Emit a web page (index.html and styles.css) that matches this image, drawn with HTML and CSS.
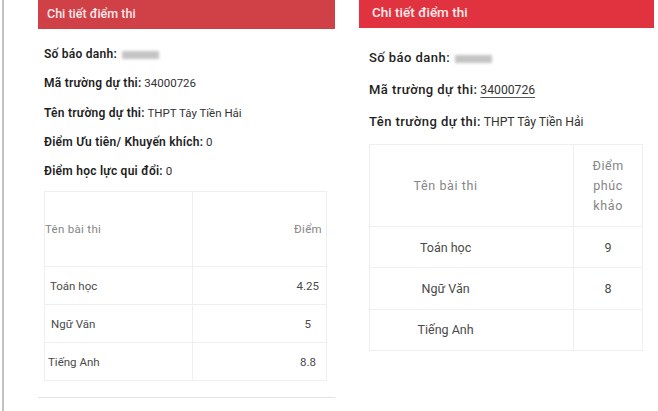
FILE: index.html
```html
<!DOCTYPE html>
<html lang="vi">
<head>
<meta charset="utf-8">
<link rel="stylesheet" href="styles.css">
</head>
<body>
<div class="page">
  <div class="left">
    <div class="edge"></div>
    <div class="card card-l">
      <div class="head head-l">Chi tiết điểm thi</div>
      <div class="body-l">
        <p class="row-l"><b>Số báo danh:</b> <span class="blur"></span></p>
        <p class="row-l"><b>Mã trường dự thi:</b> 34000726</p>
        <p class="row-l"><b>Tên trường dự thi:</b> THPT Tây Tiền Hải</p>
        <p class="row-l"><b>Điểm Ưu tiên/ Khuyến khích:</b> 0</p>
        <p class="row-l"><b>Điểm học lực qui đổi:</b> 0</p>
        <table class="tbl-l">
          <tr class="th-l"><td class="c1">Tên bài thi</td><td class="c2">Điểm</td></tr>
          <tr class="tr-l"><td class="c1 d1">Toán học</td><td class="c2 d2">4.25</td></tr>
          <tr class="tr-l"><td class="c1 d1 s1">Ngữ Văn</td><td class="c2 d2 s2">5</td></tr>
          <tr class="tr-l"><td class="c1 d1 s3">Tiếng Anh</td><td class="c2 d2 s4">8.8</td></tr>
        </table>
      </div>
    </div>
  </div>
  <div class="card card-r">
    <div class="head head-r">Chi tiết điểm thi</div>
    <div class="body-r">
      <p class="row-r"><b>Số báo danh:</b> <span class="blur"></span></p>
      <p class="row-r"><b>Mã trường dự thi:</b> <span class="link">34000726</span></p>
      <p class="row-r"><b>Tên trường dự thi:</b> THPT Tây Tiền Hải</p>
      <table class="tbl-r">
        <tr class="th-r"><td class="r1">Tên bài thi</td><td class="r2">Điểm<br>phúc<br>khảo</td></tr>
        <tr class="tr-r"><td class="r1">Toán học</td><td class="r2">9</td></tr>
        <tr class="tr-r"><td class="r1">Ngữ Văn</td><td class="r2">8</td></tr>
        <tr class="tr-r"><td class="r1">Tiếng Anh</td><td class="r2"></td></tr>
      </table>
    </div>
  </div>
</div>
</body>
</html>
```
FILE: styles.css
```css
* { box-sizing: border-box; }
html, body { margin: 0; padding: 0; background: #fff; }
body { font-family: Roboto, "Noto Sans", sans-serif; color: #2a2a2a; width: 658px; height: 411px; overflow: hidden; }
.page { display: flex; height: 411px; }
p { margin: 0; }
b { font-weight: 700; color: #1e1e1e; }

.left { display: flex; width: 335px; height: 411px; }
.edge { margin-left: 2px; width: 2px; height: 411px; background: #c2c2c2; }
.card-l { margin-left: 34px; width: 297px; height: 398px; border-bottom: 1px solid #e2e2e2; }
.head { color: #fbeaea; font-weight: 500; }
.head-l { height: 29px; line-height: 28px; background: #cf4047; padding-left: 9px; font-size: 12.5px; }
.body-l { padding: 11px 0 0 6px; }
.row-l { height: 29.3px; line-height: 29.3px; font-size: 11.5px; color: #333; }
.row-l b { font-size: 12px; letter-spacing: 0.25px; font-weight: 600; }
.blur { display: inline-block; width: 37px; height: 8px; background: #c4c4c4; filter: blur(1.8px); vertical-align: middle; margin-left: 2px; }

.tbl-l { margin-top: 5px; width: 283px; border-collapse: collapse; font-size: 11.5px; }
.tbl-l td { border: 1px solid #efefef; padding: 0; }
.th-l { height: 75px; color: #858585; letter-spacing: 0.3px; }
.tr-l { height: 38px; color: #4a4a4a; }
.c1 { width: 148px; padding-left: 0; }
.th-l .c1 { padding-left: 0; }
.c2 { text-align: right; padding-right: 4px !important; }
.d1 { padding-left: 5px !important; }
.d2 { padding-right: 7px !important; }
.s1 { padding-left: 6px !important; }
.s2 { padding-right: 15px !important; }
.s3 { padding-left: 3px !important; }
.s4 { padding-right: 10px !important; }

.card-r { margin-left: 24px; width: 295px; height: 411px; }
.head-r { height: 28px; line-height: 25px; background: #e0333f; padding-left: 13px; font-size: 13.5px; }
.body-r { padding: 14px 0 0 10px; }
.row-r { height: 32px; line-height: 32px; font-size: 12.2px; color: #333; }
.row-r b { font-size: 13px; font-weight: 500; letter-spacing: 0.45px; }
.link { text-decoration: underline; text-underline-offset: 3px; text-decoration-color: #555; }
.tbl-r { margin-top: 6px; width: 274px; border-collapse: collapse; font-size: 12.5px; color: #4a4a4a; }
.tbl-r td { border: 1px solid #efefef; padding: 0; text-align: center; }
.th-r { height: 82px; color: #858585; letter-spacing: 0.6px; }
.th-r .r2 { line-height: 20px; }
.tr-r { height: 41.3px; }
.r1 { width: 205px; padding-right: 52px !important; }
.r2 { width: 69px; }
```
